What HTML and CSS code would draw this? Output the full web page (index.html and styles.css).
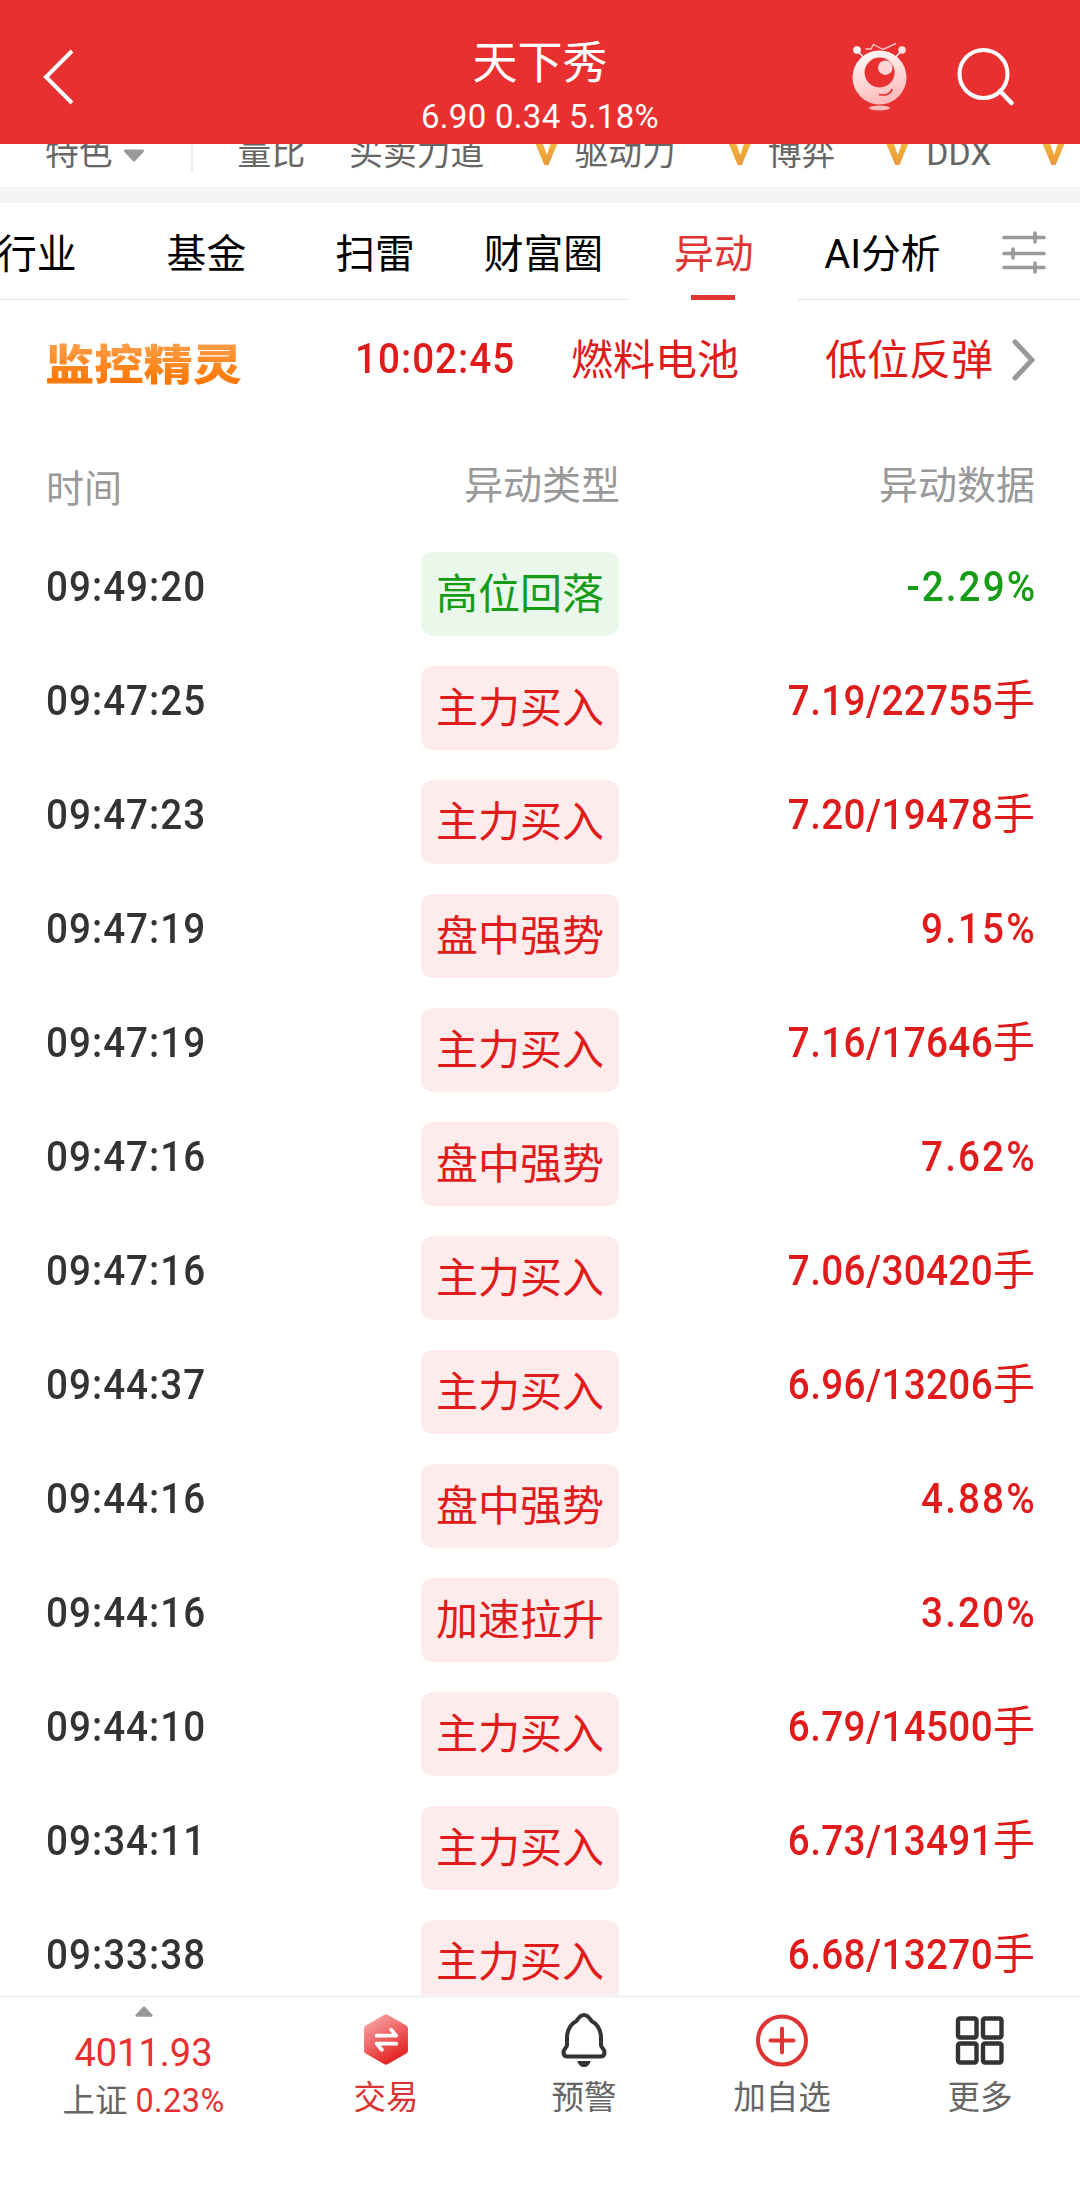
FILE: index.html
```
<!DOCTYPE html>
<html lang="zh-CN">
<head>
    <meta charset="UTF-8">
    <meta name="viewport" content="width=device-width, initial-scale=1.0">
    <title>天下秀</title>
    <link rel="stylesheet" href="styles.css">
</head>
<body>
    <header class="header">
        <div class="header-left">
            <svg width="36" height="60" viewBox="0 0 36 60"><path d="M31 4L5 30L31 56" fill="none" stroke="#fff" stroke-width="4"/></svg>
        </div>
        <div class="header-title">
            <h1>天下秀</h1>
            <p>6.90 0.34 5.18%</p>
        </div>
        <div class="header-right">
            <svg width="60" height="74" viewBox="0 0 60 74">
                <defs>
                    <linearGradient id="robot" x1="0" y1="0" x2="0.3" y2="1">
                        <stop offset="0" stop-color="#fff"/>
                        <stop offset="1" stop-color="#ffbcbc"/>
                    </linearGradient>
                </defs>
                <path d="M7 10L14 18M52 10L45 18" stroke="#ffe6e6" stroke-width="1.6"/>
                <circle cx="7" cy="10" r="3.8" fill="#fff"/>
                <circle cx="52" cy="10" r="3.8" fill="#ffe0e0"/>
                <path d="M15.5 9H21L23.5 4.5L33 9.5L46 3.5" fill="none" stroke="#ffc4c4" stroke-width="1.4"/>
                <circle cx="29.5" cy="37.5" r="27" fill="url(#robot)"/>
                <circle cx="29.6" cy="32.5" r="15" fill="#e83030"/>
                <circle cx="35.3" cy="27.7" r="7.2" fill="#ffd6d6"/>
                <path d="M29 54.5C35 56 41 54 42 49" fill="none" stroke="#e83030" stroke-width="1.6"/>
                <ellipse cx="29.5" cy="68" rx="10.5" ry="2.5" fill="#ffbaba"/>
            </svg>
            <svg class="search" width="60" height="62" viewBox="0 0 60 62">
                <circle cx="27.5" cy="27" r="24" fill="none" stroke="#fff" stroke-width="4"/>
                <path d="M44 44L55.5 56" stroke="#fff" stroke-width="4.5" stroke-linecap="round"/>
            </svg>
        </div>
    </header>

    <div class="strip">
        <div class="strip-inner">
            <span class="s1">特色</span>
            <svg class="caret" width="22" height="16" viewBox="0 0 22 16"><path d="M2.5 3H19.5L11 12Z" fill="#999" stroke="#999" stroke-width="3" stroke-linejoin="round"/></svg>
            <i class="split"></i>
            <span class="s2">量比</span>
            <span class="s3">买卖力道</span>
            <span class="vip v1"></span>
            <span class="s4">驱动力</span>
            <span class="vip v2"></span>
            <span class="s5">博弈</span>
            <span class="vip v3"></span>
            <span class="s6">DDX</span>
            <span class="vip v4"></span>
        </div>
    </div>

    <nav class="tabs">
        <a class="tab t1">行业</a>
        <a class="tab t2">基金</a>
        <a class="tab t3">扫雷</a>
        <a class="tab t4">财富圈</a>
        <a class="tab active">异动</a>
        <a class="tab t6">AI分析</a>
        <a class="filter">
            <svg width="44" height="44" viewBox="0 0 44 44"><path d="M2 7.5H42M2 23.5H42M2 37.5H42M33 3V12M11 19V28M33 33V42" fill="none" stroke="#999" stroke-width="3.6" stroke-linecap="round"/></svg>
        </a>
    </nav>

    <main class="content">
        <div class="monitor">
            <span class="logo">监控精灵</span>
            <span class="now"><i class="num">10:02:45</i></span>
            <span class="plate">燃料电池</span>
            <span class="reason">低位反弹</span>
            <svg width="26" height="44" viewBox="0 0 26 44"><path d="M4 4L21 22L4 40" fill="none" stroke="#999" stroke-width="5" stroke-linecap="round"/></svg>
        </div>
        <div class="row head">
            <span class="head-time">时间</span>
            <span class="type">异动类型</span>
            <span class="data">异动数据</span>
        </div>
        <div class="row"><span class="time"><i class="num">09:49:20</i></span><span class="tag green">高位回落</span><span class="data down"><i class="pct">-2.29%</i></span></div>
        <div class="row"><span class="time"><i class="num">09:47:25</i></span><span class="tag">主力买入</span><span class="data"><i class="vol">7.19/22755</i>手</span></div>
        <div class="row"><span class="time"><i class="num">09:47:23</i></span><span class="tag">主力买入</span><span class="data"><i class="vol">7.20/19478</i>手</span></div>
        <div class="row"><span class="time"><i class="num">09:47:19</i></span><span class="tag">盘中强势</span><span class="data"><i class="pct">9.15%</i></span></div>
        <div class="row"><span class="time"><i class="num">09:47:19</i></span><span class="tag">主力买入</span><span class="data"><i class="vol">7.16/17646</i>手</span></div>
        <div class="row"><span class="time"><i class="num">09:47:16</i></span><span class="tag">盘中强势</span><span class="data"><i class="pct">7.62%</i></span></div>
        <div class="row"><span class="time"><i class="num">09:47:16</i></span><span class="tag">主力买入</span><span class="data"><i class="vol">7.06/30420</i>手</span></div>
        <div class="row"><span class="time"><i class="num">09:44:37</i></span><span class="tag">主力买入</span><span class="data"><i class="vol">6.96/13206</i>手</span></div>
        <div class="row"><span class="time"><i class="num">09:44:16</i></span><span class="tag">盘中强势</span><span class="data"><i class="pct">4.88%</i></span></div>
        <div class="row"><span class="time"><i class="num">09:44:16</i></span><span class="tag">加速拉升</span><span class="data"><i class="pct">3.20%</i></span></div>
        <div class="row"><span class="time"><i class="num">09:44:10</i></span><span class="tag">主力买入</span><span class="data"><i class="vol">6.79/14500</i>手</span></div>
        <div class="row"><span class="time"><i class="num">09:34:11</i></span><span class="tag">主力买入</span><span class="data"><i class="vol">6.73/13491</i>手</span></div>
        <div class="row"><span class="time"><i class="num">09:33:38</i></span><span class="tag">主力买入</span><span class="data"><i class="vol">6.68/13270</i>手</span></div>
    </main>

    <footer class="bottom">
        <div class="index">
            <svg width="20" height="13" viewBox="0 0 20 13"><path d="M10 2.5L17.5 10.5H2.5Z" fill="#999" stroke="#999" stroke-width="2.5" stroke-linejoin="round"/></svg>
            <strong>4011.93</strong>
            <p>上证 <em>0.23%</em></p>
        </div>
        <div class="item trade">
            <svg width="60" height="60" viewBox="0 0 60 60">
                <defs>
                    <linearGradient id="hex" gradientUnits="userSpaceOnUse" x1="12" y1="6" x2="42" y2="54">
                        <stop offset="0.1" stop-color="#f79a9a"/>
                        <stop offset="0.9" stop-color="#e52a2a"/>
                    </linearGradient>
                </defs>
                <path d="M30 7L50 18.5V42.5L30 54L10 42.5V18.5Z" fill="url(#hex)" stroke="url(#hex)" stroke-width="7" stroke-linejoin="round"/>
                <path d="M20 26.5H41L35.5 20M41 35H20L25.5 41.5" fill="none" stroke="#fff" stroke-width="4" stroke-linecap="round" stroke-linejoin="round"/>
            </svg>
            <span>交易</span>
        </div>
        <div class="item">
            <svg width="60" height="60" viewBox="0 0 60 60">
                <path d="M30 6C26 6 24.5 9 22.5 12C15 16 13 22 13 29V36C13 39 9.5 39.5 9.5 43.5C9.5 46 11 47.5 13.5 47.5H46.5C49 47.5 50.5 46 50.5 43.5C50.5 39.5 47 39 47 36V29C47 22 45 16 37.5 12C35.5 9 34 6 30 6Z" fill="none" stroke="#333" stroke-width="4" stroke-linejoin="round"/>
                <path d="M23.5 52H36.5C36 55.5 33.5 58 30 58C26.5 58 24 55.5 23.5 52Z" fill="#333"/>
            </svg>
            <span>预警</span>
        </div>
        <div class="item">
            <svg width="60" height="60" viewBox="0 0 60 60">
                <circle cx="30" cy="31.5" r="24" fill="none" stroke="#e03434" stroke-width="4"/>
                <path d="M30 19.5V43.5M18.5 31.5H41.5" stroke="#e03434" stroke-width="4" stroke-linecap="round"/>
            </svg>
            <span>加自选</span>
        </div>
        <div class="item">
            <svg width="60" height="60" viewBox="0 0 60 60">
                <g fill="none" stroke="#333" stroke-width="4.4">
                    <rect x="8" y="9.5" width="18.5" height="19" rx="2"/>
                    <rect x="33" y="9.5" width="18.5" height="19" rx="2"/>
                    <rect x="8" y="34.5" width="18.5" height="19" rx="2"/>
                    <rect x="33" y="34.5" width="18.5" height="19" rx="2"/>
                </g>
            </svg>
            <span>更多</span>
        </div>
    </footer>
</body>
</html>
```
FILE: styles.css
```
* {
    box-sizing: border-box;
    margin: 0;
    padding: 0;
}

body {
    width: 1080px;
    height: 2190px;
    display: flex;
    flex-direction: column;
    overflow: hidden;
    background-color: #fff;
    color: #333;
    font-family: Roboto, "Noto Sans CJK SC", sans-serif;
    white-space: nowrap;
}

svg {
    display: block;
    flex-shrink: 0;
}

i, em {
    font-style: normal;
}

.header {
    height: 144px;
    flex-shrink: 0;
    display: flex;
    justify-content: space-between;
    background-color: #e83030;
    color: #fff;
}

.header-left {
    width: 250px;
    padding: 47px 0 0 41px;
}

.header-title {
    text-align: center;
    padding-top: 34px;
}

.header-title h1 {
    font-size: 45px;
    font-weight: 400;
    line-height: 60px;
}

.header-title p {
    font-size: 33px;
    line-height: 46px;
    letter-spacing: 0.3px;
}

.header-right {
    width: 250px;
    display: flex;
    padding: 40px 0 0 20px;
}

.search {
    margin: 7px 0 0 46px;
}

/* indicator strip, partly scrolled under the header */
.strip {
    height: 59px;
    flex-shrink: 0;
    overflow: hidden;
    border-bottom: 16px solid #f4f4f4;
}

.strip-inner {
    display: flex;
    align-items: center;
    height: 40px;
    margin-top: -10px;
    padding-left: 45px;
    font-size: 33.8px;
    line-height: 40px;
    color: #666;
}

.caret {
    margin: 4px 0 0 10px;
}

.split {
    width: 2px;
    height: 36px;
    margin: 0 45px 0 46px;
    background-color: #eee;
}

.s3 {
    margin-left: 44px;
}

.vip {
    width: 26px;
    height: 26px;
    flex-shrink: 0;
    margin-bottom: 4px;
    background: linear-gradient(#f5b93d, #e8983a);
    clip-path: polygon(0 0, 30% 0, 52% 62%, 72% 0, 100% 0, 58% 100%, 42% 100%);
}

.v1 { margin-left: 49px; margin-right: 15px; }
.v2 { margin-left: 51px; margin-right: 15px; }
.v3 { margin-left: 49px; margin-right: 16px; }
.v4 { margin-left: 49px; }

.tabs {
    height: 97px;
    flex-shrink: 0;
    display: flex;
    color: #000;
    font-size: 39.8px;
    line-height: 103px;
    box-shadow: inset 0 -1px #e4e4e4;
}

.t1 { margin-left: -3px; }
.t2 { margin-left: 90px; }
.t3 { margin-left: 89px; }
.t4 { margin-left: 69px; }

.active {
    width: 169px;
    margin-left: 26px;
    text-align: center;
    color: #e03434;
    background: linear-gradient(#e03434, #e03434) 62px 92px / 44px 5px no-repeat #fff;
}

.t6 {
    margin-left: 26px;
}

.filter {
    margin: 27px 0 0 61px;
}

.content {
    height: 1695px;
    flex-shrink: 0;
    overflow: hidden;
}

.monitor {
    display: flex;
    height: 118px;
    padding-left: 45px;
    font-size: 42px;
    line-height: 122px;
    color: #e01b1b;
}

.logo {
    width: 180px;
    margin-right: 130px;
    font-size: 44px;
    font-weight: 900;
    line-height: 132px;
    background: linear-gradient(#ff9f4a 35%, #ff7500 72%);
    -webkit-background-clip: text;
    background-clip: text;
    -webkit-text-fill-color: transparent;
    transform: scale(1.12, 0.96);
    transform-origin: left;
}

/* digits are set narrower than the regular face */
.num, .vol, .pct {
    display: inline-block;
    transform: scaleX(0.92);
    transform-origin: left;
    font-weight: 500;
    letter-spacing: 1.1px;
}

.vol {
    transform-origin: right;
    letter-spacing: 0.4px;
}

.pct {
    transform-origin: right;
    letter-spacing: 2.3px;
    margin-right: -2px;
}

.now {
    width: 216px;
    line-height: 118px;
}

.plate {
    width: 254px;
}

.monitor svg {
    margin: 38px 0 0 18px;
}

.row {
    display: flex;
    align-items: flex-start;
    height: 114px;
    padding: 0 45px 0 46px;
}

.head {
    height: 134px;
    padding-top: 39px;
    color: #999;
    font-size: 39px;
    line-height: 58px;
}

.head-time {
    width: 418px;
    padding-top: 3px;
    font-size: 38px;
}

.time {
    width: 375px;
    font-size: 42px;
    line-height: 70px;
}

.tag {
    width: 198px;
    height: 84px;
    border-radius: 12px;
    background-color: #feecec;
    color: #e01b1b;
    font-size: 42px;
    line-height: 85px;
    text-align: center;
}

.green {
    background-color: #eaf7eb;
    color: #179c17;
}

.data {
    margin-left: auto;
    font-size: 42px;
    line-height: 70px;
    color: #e01b1b;
}

.down {
    color: #179c17;
}

.head .data {
    font-size: 39px;
    line-height: 58px;
    color: #999;
}

.bottom {
    display: flex;
    flex: 1;
    border-top: 3px solid #f4f4f4;
    font-size: 32.5px;
    color: #666;
}

.index {
    width: 287px;
    display: flex;
    flex-direction: column;
    align-items: center;
    padding-top: 7px;
}

.index strong {
    margin-top: 11px;
    font-size: 38px;
    font-weight: 400;
    line-height: 48px;
    color: #e83030;
}

.index p {
    line-height: 49px;
}

.index em {
    color: #e83030;
    letter-spacing: 0.4px;
}

.item {
    width: 198px;
    display: flex;
    flex-direction: column;
    align-items: center;
    padding-top: 11px;
}

.item span {
    margin-top: 5px;
    line-height: 48px;
}

.trade {
    color: #d93434;
}

.trade svg {
    padding: 2px;
}
```
